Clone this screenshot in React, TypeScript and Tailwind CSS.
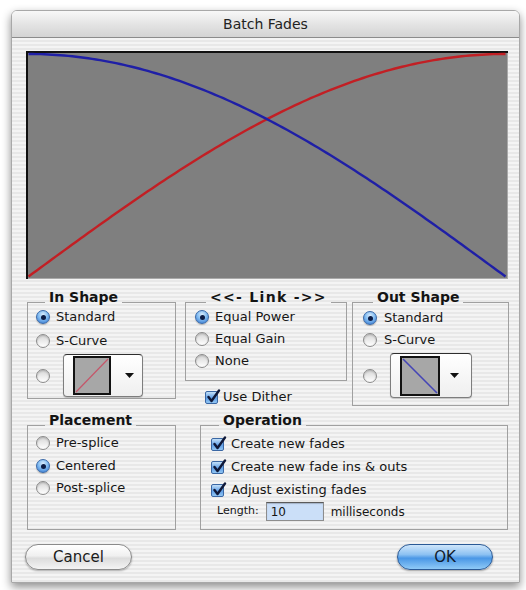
import React from "react";

const W = 482;
const H = 228;

function curve(kind: "cos" | "sin") {
  const pts: string[] = [];
  const x0 = 2.5;
  const x1 = W - 2.5;
  const top = 3;
  const bot = H - 2.5;
  for (let i = 0; i <= 120; i++) {
    const t = i / 120;
    const v = kind === "cos" ? Math.cos((t * Math.PI) / 2) : Math.sin((t * Math.PI) / 2);
    const x = x0 + t * (x1 - x0);
    const y = bot - v * (bot - top);
    pts.push(`${x.toFixed(2)},${y.toFixed(2)}`);
  }
  return pts.join(" ");
}

function Graph() {
  return (
    <svg width={W} height={H} viewBox={`0 0 ${W} ${H}`} className="block shrink-0">
      <rect x="0" y="0" width={W} height={H} fill="#7f7f7f" />
      <rect x={W - 1} y="0" width="1" height={H} fill="#a9a9a9" />
      <rect x="0" y={H - 1} width={W} height="1" fill="#a9a9a9" />
      <rect x="0" y="0" width={W} height="2" fill="#111" />
      <rect x="0" y="0" width="2" height={H} fill="#111" />
      <polyline points={curve("sin")} fill="none" stroke="#c21f24" strokeWidth="2.4" strokeLinejoin="round" />
      <polyline points={curve("cos")} fill="none" stroke="#1f1fa6" strokeWidth="2.4" strokeLinejoin="round" />
    </svg>
  );
}

function Radio({ on }: { on?: boolean }) {
  return on ? (
    <span className="flex h-[14px] w-[14px] shrink-0 items-center justify-center rounded-full border border-[#3a69a8] bg-[radial-gradient(circle_at_50%_30%,#d9ecfc_0%,#84bdf2_45%,#2e72cd_100%)] shadow-[0_1px_1px_rgba(0,0,0,0.25)]">
      <span className="h-[5px] w-[5px] rounded-full bg-[#0c1c45]" />
    </span>
  ) : (
    <span className="block h-[14px] w-[14px] shrink-0 rounded-full border border-[#8b8b8b] bg-[linear-gradient(180deg,#d6d6d6,#ffffff)] shadow-[inset_0_1px_2px_rgba(0,0,0,0.2)]" />
  );
}

function Check() {
  return (
    <span className="relative block h-[13px] w-[13px] shrink-0 rounded-[2px] border border-[#3a67a4] bg-[linear-gradient(180deg,#c3e0f9,#5f9ee6_55%,#92c6f3)]">
      <svg className="absolute -top-[3px] left-[0px]" width="15" height="15" viewBox="0 0 15 15">
        <path d="M2.5 8 L5.5 12 L13 1.5" fill="none" stroke="#0f1838" strokeWidth="2.4" strokeLinecap="round" strokeLinejoin="round" />
      </svg>
    </span>
  );
}

function Group({
  title,
  className,
  legendClass,
  children,
}: {
  title: string;
  className: string;
  legendClass: string;
  children: React.ReactNode;
}) {
  return (
    <fieldset className={`shrink-0 border border-[#a0a0a0] ${className}`}>
      <legend className={`px-[4px] pb-[10px] text-[14px] font-bold leading-[16px] text-[#141414] ${legendClass}`}>
        {title}
      </legend>
      {children}
    </fieldset>
  );
}

function ShapeMenu({ out }: { out?: boolean }) {
  const sw = out ? 40 : 38;
  const sh = out ? 40 : 39;
  return (
    <div
      className={`flex shrink-0 items-center rounded-[4px] border border-[#7d7d7d] border-t-[#2e2e2e] bg-[linear-gradient(180deg,#ffffff,#efefef)] pl-[9px] shadow-[0_1px_1px_rgba(0,0,0,0.2)] ${
        out ? "h-[45px] w-[82px]" : "h-[43px] w-[80px]"
      }`}
    >
      <svg width={sw} height={sh} viewBox={`0 0 ${sw} ${sh}`} className="block shrink-0">
        <rect x="0" y="0" width={sw} height={sh} fill="#a7a7a7" />
        <rect x="1" y="1" width={sw - 2} height={sh - 2} fill="none" stroke="#121212" strokeWidth="2" />
        {out ? (
          <line x1="3" y1="3" x2={sw - 3} y2={sh - 3} stroke="#4545b6" strokeWidth="1.6" />
        ) : (
          <line x1="3" y1={sh - 3} x2={sw - 3} y2="3" stroke="#c5566a" strokeWidth="1.2" />
        )}
      </svg>
      <svg width="9" height="5" viewBox="0 0 9 5" className={`ml-auto block shrink-0 ${out ? "mr-[12px]" : "mr-[8px]"}`}>
        <polygon points="0,0 9,0 4.5,5" fill="#111" />
      </svg>
    </div>
  );
}

function Row({ children, className = "" }: { children: React.ReactNode; className?: string }) {
  return <div className={`flex h-[20px] items-center text-[13px] ${className}`}>{children}</div>;
}

export default function App() {
  return (
    <div className="h-[590px] w-[526px] bg-white pl-[11px] pt-[10px] font-['DejaVu_Sans',sans-serif] text-[#161616]">
      <div className="flex h-[573px] w-[509px] flex-col overflow-hidden rounded-t-[6px] border border-[#a8a8a8] shadow-[0_4px_10px_rgba(0,0,0,0.45)]">
        <div className="flex h-[27px] shrink-0 items-center justify-center border-b border-[#8c8c8c] bg-[linear-gradient(180deg,#f8f8f8,#e4e4e4_50%,#d4d4d4)] text-[14px] text-[#222]">
          Batch Fades
        </div>
        <div className="flex flex-1 flex-col bg-[repeating-linear-gradient(180deg,#f4f4f4_0px,#f4f4f4_2px,#e8e8e8_2px,#e8e8e8_4px)] pl-[14px] pt-[13px]">
          <Graph />

          <div className="mt-[10px] flex h-[118px] items-start">
            <Group title="In Shape" className="ml-[1px] h-[110px] w-[149px]" legendClass="ml-[17px]">
              <div className="-mt-[8px] flex flex-col pl-[8px]">
                <Row className="gap-[6px]">
                  <Radio on />
                  <span>Standard</span>
                </Row>
                <Row className="mt-[4px] gap-[6px]">
                  <Radio />
                  <span>S-Curve</span>
                </Row>
                <div className="mt-[3px] flex h-[43px] items-center gap-[13px]">
                  <Radio />
                  <ShapeMenu />
                </div>
              </div>
            </Group>

            <div className="ml-[9px] flex w-[162px] shrink-0 flex-col">
              <Group title={"<<- Link ->>"} className="h-[92px] w-[162px]" legendClass="ml-[20px] tracking-[1.3px]">
                <div className="-mt-[8px] flex flex-col gap-[2px] pl-[9px]">
                  <Row className="gap-[6px]">
                    <Radio on />
                    <span>Equal Power</span>
                  </Row>
                  <Row className="gap-[6px]">
                    <Radio />
                    <span>Equal Gain</span>
                  </Row>
                  <Row className="gap-[6px]">
                    <Radio />
                    <span>None</span>
                  </Row>
                </div>
              </Group>
              <Row className="mt-[6px] gap-[5px] pl-[20px]">
                <Check />
                <span>Use Dither</span>
              </Row>
            </div>

            <Group title="Out Shape" className="ml-[5px] h-[117px] w-[157px]" legendClass="ml-[20px]">
              <div className="-mt-[7px] flex flex-col pl-[10px]">
                <Row className="gap-[7px]">
                  <Radio on />
                  <span>Standard</span>
                </Row>
                <Row className="mt-[2px] gap-[7px]">
                  <Radio />
                  <span>S-Curve</span>
                </Row>
                <div className="mt-[3px] flex h-[45px] items-center gap-[13px]">
                  <Radio />
                  <ShapeMenu out />
                </div>
              </div>
            </Group>
          </div>

          <div className="mt-[5px] flex h-[118px] items-start">
            <Group title="Placement" className="ml-[1px] h-[118px] w-[149px]" legendClass="ml-[17px]">
              <div className="-mt-[5px] flex flex-col pl-[8px]">
                <Row className="gap-[6px]">
                  <Radio />
                  <span>Pre-splice</span>
                </Row>
                <Row className="mt-[3px] gap-[6px]">
                  <Radio on />
                  <span>Centered</span>
                </Row>
                <Row className="mt-[2px] gap-[6px]">
                  <Radio />
                  <span>Post-splice</span>
                </Row>
              </div>
            </Group>

            <Group title="Operation" className="ml-[24px] h-[118px] w-[308px]" legendClass="ml-[18px]">
              <div className="-mt-[4px] flex flex-col pl-[10px]">
                <Row className="gap-[7px]">
                  <Check />
                  <span>Create new fades</span>
                </Row>
                <Row className="mt-[3px] gap-[7px]">
                  <Check />
                  <span>Create new fade ins &amp; outs</span>
                </Row>
                <Row className="mt-[3px] gap-[7px]">
                  <Check />
                  <span>Adjust existing fades</span>
                </Row>
                <div className="ml-[6px] mt-[2px] flex h-[19px] items-center">
                  <span className="text-[11px]">Length:</span>
                  <div className="ml-[7px] flex h-[19px] w-[58px] items-center border border-[#8d8d8d] border-t-[#5a5a5a] bg-[#cbdff8] pl-[4px] text-[12px] shadow-[inset_0_1px_1px_rgba(0,0,0,0.2)]">
                    10
                  </div>
                  <span className="ml-[7px] text-[12px]">milliseconds</span>
                </div>
              </div>
            </Group>
          </div>

          <div className="mt-[14px] flex items-center justify-between">
            <button className="-ml-[1px] flex h-[26px] w-[107px] items-center justify-center rounded-full border border-[#8a8a8a] bg-[linear-gradient(180deg,#ffffff,#f0f0f0_45%,#dcdcdc_55%,#f4f4f4)] text-[15px] text-[#1a1a1a] shadow-[0_1px_2px_rgba(0,0,0,0.3)]">
              Cancel
            </button>
            <button className="mr-[26px] flex h-[26px] w-[96px] items-center justify-center rounded-full border border-[#2b5a96] bg-[linear-gradient(180deg,#cfe6fb,#8cc1f2_40%,#4a97e6_55%,#8fcaf7)] text-[15px] text-[#101a2c] shadow-[0_1px_2px_rgba(0,0,0,0.35)]">
              OK
            </button>
          </div>
        </div>
      </div>
    </div>
  );
}
